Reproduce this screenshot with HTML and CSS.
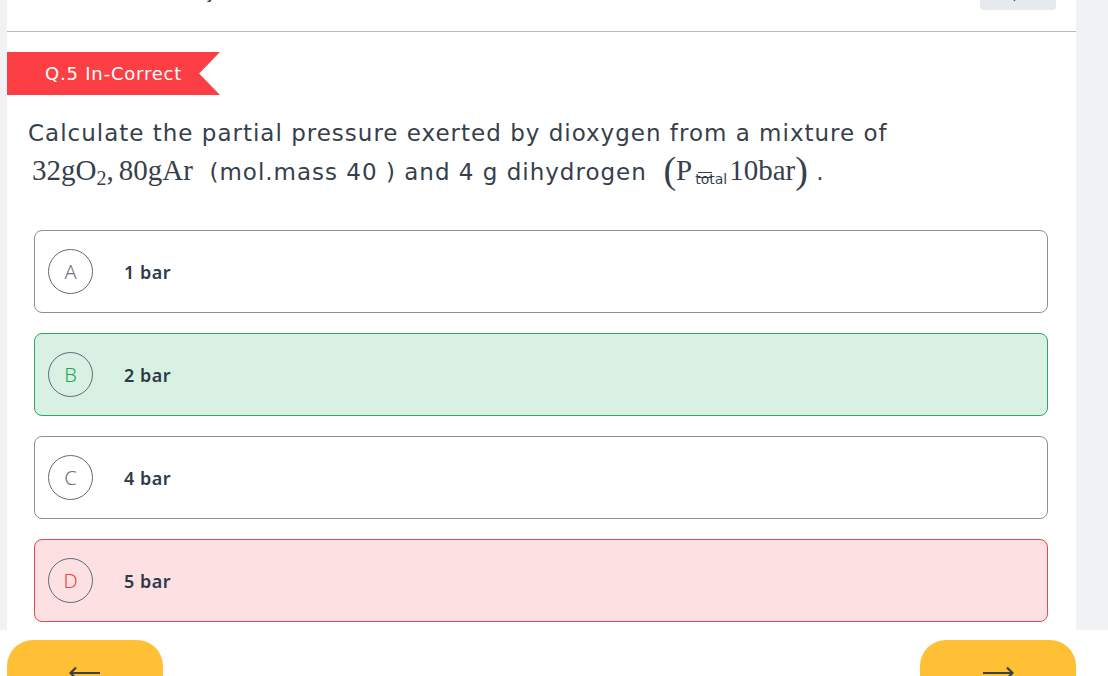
FILE: index.html
```html
<!DOCTYPE html>
<html>
<head>
<meta charset="utf-8">
<link rel="stylesheet" href="styles.css">
</head>
<body>
<div class="page">
  <div class="card">
    <div class="topbar">
      <span class="top-text">(+4, -1) Marks Penalty</span>
      <span class="top-btn">Report</span>
    </div>
    <div class="divider"></div>
    <div class="tag">Q.5 In-Correct</div>
    <div class="question">
      <p class="q-line">Calculate the partial pressure exerted by dioxygen from a mixture of</p>
      <p class="q-line q-line2"><span class="math">32gO<sub>2</sub>,<span class="thin"></span>80gAr</span> &nbsp;(mol.mass 40 ) and 4 g dihydrogen &nbsp;<span class="math"><span class="paren">(</span>P<span class="sub-total">total</span>10bar<span class="paren">)</span></span> .</p>
    </div>
    <div class="options">
      <div class="option">
        <span class="badge">A</span>
        <span class="opt-text">1 bar</span>
      </div>
      <div class="option correct">
        <span class="badge">B</span>
        <span class="opt-text">2 bar</span>
      </div>
      <div class="option">
        <span class="badge">C</span>
        <span class="opt-text">4 bar</span>
      </div>
      <div class="option wrong">
        <span class="badge">D</span>
        <span class="opt-text">5 bar</span>
      </div>
    </div>
  </div>
  <div class="footer">
    <button class="nav-btn" aria-label="Previous"><svg class="arrow" width="32" height="14" viewBox="0 0 32 14"><path d="M31 7H2M7 1.5L1.5 7L7 12.5" fill="none" stroke="#3a4046" stroke-width="2.2"/></svg></button>
    <button class="nav-btn" aria-label="Next"><svg class="arrow" width="32" height="14" viewBox="0 0 32 14"><path d="M1 7H30M25 1.5L30.5 7L25 12.5" fill="none" stroke="#3a4046" stroke-width="2.2"/></svg></button>
  </div>
</div>
</body>
</html>
```
FILE: styles.css
```css
* { box-sizing: border-box; }
html, body { margin: 0; padding: 0; }
body {
  background: #f1f2f4;
  font-family: "DejaVu Sans", "Noto Sans", sans-serif;
  color: #333f4d;
  overflow: hidden;
}
.page {
  width: 1108px;
  height: 676px;
  display: flex;
  flex-direction: column;
}
.card {
  margin-left: 7px;
  width: 1069px;
  height: 630px;
  flex-shrink: 0;
  background: #ffffff;
  display: flex;
  flex-direction: column;
  overflow: hidden;
}
.topbar {
  display: flex;
  justify-content: space-between;
  align-items: flex-start;
  margin-top: -20px;
  height: 51px;
  flex-shrink: 0;
  padding: 0 20px 0 8px;
}
.top-text {
  font-size: 18px;
  line-height: 24px;
  color: #2f3a48;
}
.top-btn {
  width: 76px;
  height: 30px;
  background: #e6eaef;
  border-radius: 4px;
  font-size: 14px;
  color: #2f3a48;
  line-height: 26px;
  text-align: center;
}
.divider {
  height: 1px;
  flex-shrink: 0;
  background: #b3bbc3;
}
.tag {
  margin-top: 20px;
  width: 213px;
  height: 43px;
  flex-shrink: 0;
  background: #fc3f45;
  color: #ffffff;
  font-size: 18px;
  letter-spacing: 0.8px;
  line-height: 43px;
  padding-left: 38px;
  clip-path: polygon(0 0, 100% 0, 90.2% 50%, 100% 100%, 0 100%);
}
.question {
  padding: 20px 0 0 21px;
  flex-shrink: 0;
}
.q-line {
  margin: 0;
  font-size: 23px;
  line-height: 37px;
  color: #363f4b;
  letter-spacing: 1px;
}
.q-line2 { padding-left: 4px; }
.math {
  font-family: "Liberation Serif", "Times New Roman", serif;
  font-size: 29px;
  letter-spacing: 0;
}
.math sub {
  font-size: 20px;
  vertical-align: -5px;
  line-height: 0;
}
.thin {
  display: inline-block;
  width: 5px;
}
.paren {
  font-size: 38px;
  vertical-align: -3px;
  line-height: 0;
}
.sub-total {
  position: relative;
  font-family: "DejaVu Sans", sans-serif;
  font-size: 14px;
  letter-spacing: 0;
  vertical-align: -4px;
  margin-left: 3px;
  margin-right: 2px;
}
.sub-total::after {
  content: "";
  position: absolute;
  left: 3px;
  top: 1px;
  width: 14px;
  height: 4px;
  border-top: 1px solid #363f4b;
  border-bottom: 1px solid #363f4b;
}
.options {
  margin: 32px 0 0 27px;
  width: 1014px;
  flex-shrink: 0;
  display: flex;
  flex-direction: column;
  gap: 20px;
}
.option {
  height: 83px;
  flex-shrink: 0;
  border: 1px solid #8c8f93;
  border-radius: 8px;
  display: flex;
  align-items: center;
  padding-left: 13px;
  background: #ffffff;
}
.option.correct {
  background: #d9f1e3;
  border-color: #2fa562;
}
.option.wrong {
  background: #fde0e2;
  border-color: #e5484e;
}
.badge {
  width: 45px;
  height: 45px;
  border: 1px solid #5d6b7a;
  border-radius: 50%;
  display: flex;
  align-items: center;
  justify-content: center;
  font-family: "Noto Sans", sans-serif;
  font-size: 20px;
  font-weight: 300;
  color: #6b7480;
}
.correct .badge { color: #22a556; }
.wrong .badge { color: #f0414a; }
.opt-text {
  margin-left: 31px;
  font-family: "Noto Sans", sans-serif;
  font-size: 18px;
  font-weight: 600;
  letter-spacing: 0.5px;
  color: #2f3a48;
}
.footer {
  height: 46px;
  flex-shrink: 0;
  background: #ffffff;
  display: flex;
  justify-content: space-between;
  padding: 10px 32px 0 7px;
}
.nav-btn {
  width: 156px;
  height: 60px;
  border: none;
  background: #ffc036;
  border-radius: 26px;
  padding: 0;
  align-self: flex-start;
  display: flex;
  justify-content: center;
  align-items: flex-start;
}
.arrow {
  margin-top: 26px;
  display: block;
}
```
